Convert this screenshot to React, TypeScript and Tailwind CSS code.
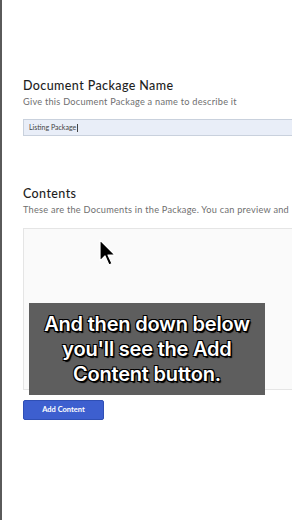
import React from 'react';

export default function App() {
  return (
    <div className="relative h-[520px] w-[292px] overflow-hidden bg-white border-l-2 border-[#5a5a5a]" style={{ fontFamily: 'Lato, "Open Sans", sans-serif' }}>
      <div className="w-[420px] pl-[21px] pt-[78px]">
        <h2 className="text-[12.5px] leading-[16px] font-medium text-[#1e1e1e] tracking-[0.4px]">Document Package Name</h2>
        <p className="mt-[2px] text-[9.2px] leading-[12px] text-[#6f6f6f] tracking-[0.25px]">Give this Document Package a name to describe it</p>
        <div className="mt-[11px] h-[17px] border border-[#c9d1dd] bg-[#e9eef8] flex items-center pl-[5px]">
          <span className="text-[7px] text-[#444]">Listing Package</span>
          <span className="ml-[1px] h-[8px] w-px bg-[#444]" />
        </div>

        <h2 className="mt-[50px] text-[12.5px] leading-[16px] font-medium text-[#1e1e1e] tracking-[0.4px]">Contents</h2>
        <p className="mt-[2px] text-[9.2px] leading-[12px] text-[#6f6f6f] whitespace-nowrap tracking-[0.25px]">These are the Documents in the Package. You can preview and</p>
        <div className="mt-[12px] h-[162px] border border-[#e5e5e5] bg-[#fafafa]" />

        <button className="mt-[10px] h-[20px] w-[81px] rounded-[2px] bg-[#3d5fcf] border border-[#2f4fb5] text-white text-[7.5px] font-bold">Add Content</button>
      </div>

      <div className="absolute left-[27px] top-[303px] w-[236px] h-[92px] bg-[#5e5e5e] flex flex-col items-center justify-center">
        <p className="text-center text-white text-[20px] leading-[25px] font-semibold tracking-[-0.2px]" style={{ fontFamily: 'Inter, sans-serif', textShadow: '1px 1px 0 #000, -1px 1px 0 #000, 1px -1px 0 #000, -1px -1px 0 #000, 1.5px 1.5px 1px #000' }}>
          And then down below<br />you'll see the Add<br />Content button.
        </p>
      </div>

      <svg className="absolute left-[96px] top-[239px]" width="20" height="28" viewBox="0 0 20 28">
        <path d="M2 1 L2 22 L7 17 L11 26 L14 24.5 L10 16 L17 16 Z" fill="#000" stroke="#fff" strokeWidth="1.2" strokeLinejoin="round" />
      </svg>
    </div>
  );
}
